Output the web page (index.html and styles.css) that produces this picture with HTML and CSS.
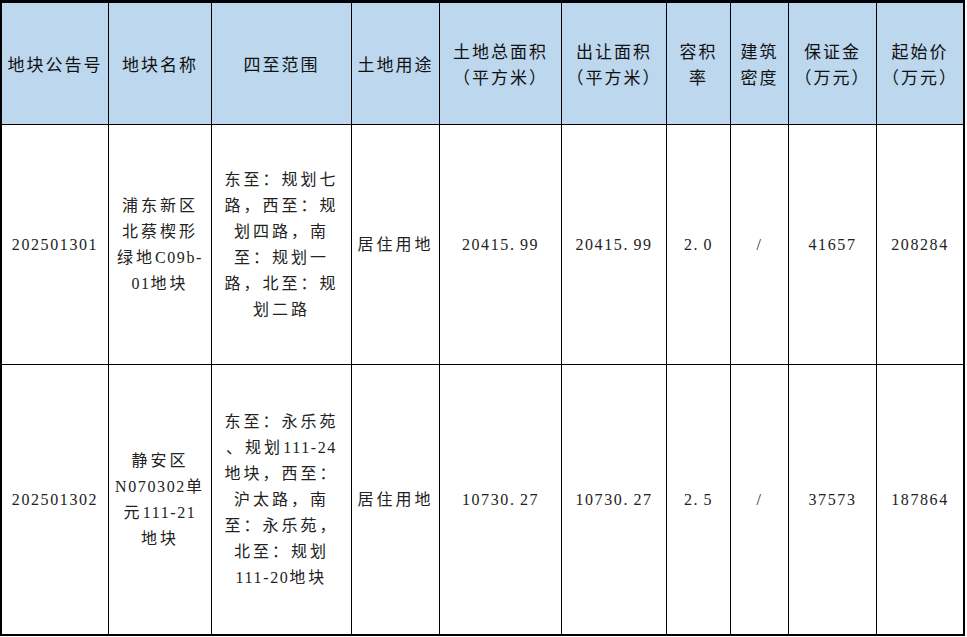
FILE: index.html
```html
<!DOCTYPE html>
<html lang="zh-CN">
<head>
<meta charset="utf-8">
<title>地块出让信息</title>
<link rel="stylesheet" href="styles.css">
</head>
<body>
<table class="land-table">
  <colgroup>
    <col class="c1"><col class="c2"><col class="c3"><col class="c4"><col class="c5">
    <col class="c6"><col class="c7"><col class="c8"><col class="c9"><col class="c10">
  </colgroup>
  <thead>
    <tr class="head-row">
      <th>地块公告号</th>
      <th>地块名称</th>
      <th>四至范围</th>
      <th>土地用途</th>
      <th>土地总面积<br>（平方米）</th>
      <th>出让面积<br>（平方米）</th>
      <th>容积<br>率</th>
      <th>建筑<br>密度</th>
      <th>保证金<br>（万元）</th>
      <th>起始价<br>（万元）</th>
    </tr>
  </thead>
  <tbody>
    <tr class="row-1">
      <td class="num">202501301</td>
      <td>浦东新区<br>北蔡楔形<br>绿地<span class="lat">C09b-</span><br><span class="lat">01</span>地块</td>
      <td>东至：规划七<br>路，西至：规<br>划四路，南<br>至：规划一<br>路，北至：规<br>划二路</td>
      <td>居住用地</td>
      <td class="num">20415<span class="dot">.</span>99</td>
      <td class="num">20415<span class="dot">.</span>99</td>
      <td class="num">2<span class="dot">.</span>0</td>
      <td class="num">/</td>
      <td class="num">41657</td>
      <td class="num">208284</td>
    </tr>
    <tr class="row-2">
      <td class="num">202501302</td>
      <td>静安区<br><span class="lat">N070302</span>单<br>元<span class="lat">111-21</span><br>地块</td>
      <td>东至：永乐苑<br>、规划<span class="lat">111-24</span><br>地块，西至：<br>沪太路，南<br>至：永乐苑，<br>北至：规划<br><span class="lat">111-20</span>地块</td>
      <td>居住用地</td>
      <td class="num">10730<span class="dot">.</span>27</td>
      <td class="num">10730<span class="dot">.</span>27</td>
      <td class="num">2<span class="dot">.</span>5</td>
      <td class="num">/</td>
      <td class="num">37573</td>
      <td class="num">187864</td>
    </tr>
  </tbody>
</table>
</body>
</html>
```

FILE: styles.css
```css
html, body {
  margin: 0;
  padding: 0;
  background: #ffffff;
}

.land-table {
  table-layout: fixed;
  border-collapse: separate;
  border-spacing: 0;
  width: 965px;
  border-style: solid;
  border-color: #000;
  border-width: 3px 2px 2px 2px;
}

.c1 { width: 107px; }
.c2 { width: 103px; }
.c3 { width: 140px; }
.c4 { width: 88px; }
.c5 { width: 122px; }
.c6 { width: 105px; }
.c7 { width: 64px; }
.c8 { width: 58px; }
.c9 { width: 88px; }
.c10 { width: 86px; }

.land-table th,
.land-table td {
  box-sizing: border-box;
  padding: 0;
  text-align: center;
  vertical-align: middle;
  border-right: 1px solid #000;
  border-bottom: 1px solid #000;
  overflow: hidden;
  white-space: nowrap;
}

.land-table tr > :last-child {
  border-right: none;
}

.land-table tbody tr:last-child td {
  border-bottom: none;
}

.head-row th {
  height: 122px;
  background: #bdd7ee;
  font-family: "Noto Sans CJK SC", "Noto Sans", sans-serif;
  font-size: 17px;
  font-weight: normal;
  letter-spacing: 2px;
  line-height: 26px;
  color: #111;
}

.land-table td {
  font-family: "Liberation Serif", "Noto Sans CJK SC", serif;
  font-size: 16px;
  letter-spacing: 3px;
  line-height: 26px;
  color: #222;
}

.row-1 td { height: 240px; }
.row-2 td { height: 269px; }

.land-table td.num {
  letter-spacing: 1.6px;
}

.lat {
  letter-spacing: 1.6px;
}

.dot {
  letter-spacing: 6px;
}
```
